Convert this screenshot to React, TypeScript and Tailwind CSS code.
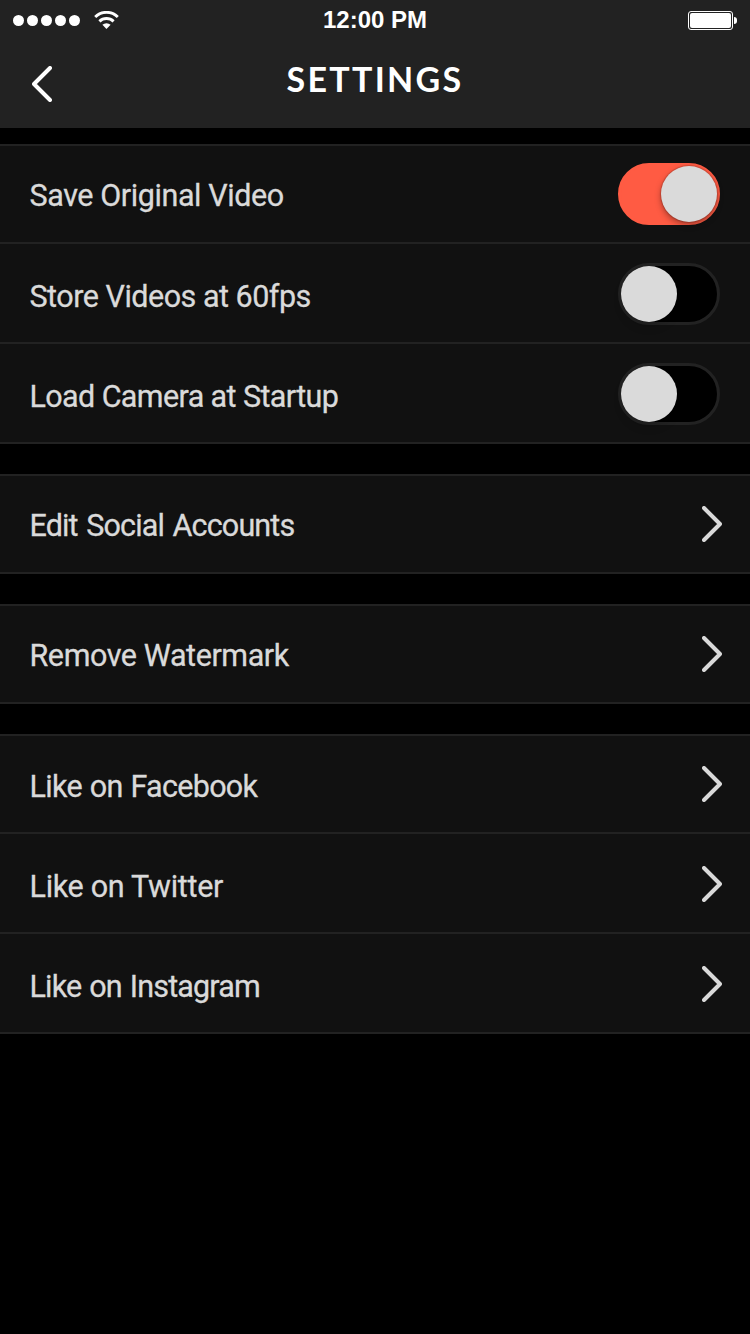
import { useState } from "react";

type RowProps = {
  label: string;
  first?: boolean;
  textClass: string;
  toggle?: boolean;
  on?: boolean;
};

function Toggle({ initial }: { initial: boolean }) {
  const [on, setOn] = useState(initial);
  return (
    <button
      role="switch"
      aria-checked={on}
      onClick={() => setOn(!on)}
      className={
        on
          ? "mr-[30px] flex h-[62px] w-[102px] shrink-0 items-center justify-end rounded-full border-3 border-[#ff5b43] bg-[#ff5b43]"
          : "mr-[30px] flex h-[62px] w-[102px] shrink-0 items-center justify-start rounded-full border-3 border-[#222222] bg-black"
      }
    >
      <span
        className={
          on
            ? "size-14 rounded-full bg-[#dadada] shadow-[0_3px_6px_rgba(0,0,0,0.35),0_0_1px_1px_rgba(0,0,0,0.15)]"
            : "size-14 rounded-full bg-[#dadada] shadow-[0_6px_8px_rgba(0,0,0,0.12)]"
        }
      />
    </button>
  );
}

function ChevronRight() {
  return (
    <svg className="mr-7 h-9 w-5 shrink-0" viewBox="0 0 20 36" fill="none" stroke="#dadada" strokeWidth="4" strokeLinecap="round" strokeLinejoin="round">
      <path d="M2 2L18 18L2 34" />
    </svg>
  );
}

function Row({ label, first, textClass, toggle, on }: RowProps) {
  return (
    <div
      className={
        first
          ? "flex h-[100px] items-center justify-between border-y-2 border-[#222222] bg-[#111111]"
          : "flex h-[100px] items-center justify-between border-b-2 border-[#222222] bg-[#111111] pt-0.5"
      }
    >
      <span className={textClass}>{label}</span>
      {toggle ? <Toggle initial={!!on} /> : <ChevronRight />}
    </div>
  );
}

export default function App() {
  return (
    <div className="flex h-[1334px] w-[750px] flex-col overflow-hidden bg-black font-[Roboto,sans-serif] text-[30.5px] leading-10 whitespace-nowrap text-[#dadada]">
      <header className="h-32 bg-[#222222] text-white">
        <div className="grid h-10 grid-cols-3 items-center">
          <div className="flex items-center pl-[13px]">
            <div className="flex gap-[3px] pt-px">
              <i className="size-[11px] rounded-full bg-white" />
              <i className="size-[11px] rounded-full bg-white" />
              <i className="size-[11px] rounded-full bg-white" />
              <i className="size-[11px] rounded-full bg-white" />
              <i className="size-[11px] rounded-full bg-white" />
            </div>
            <svg className="ml-[14px] h-[18px] w-[25px]" viewBox="0 0 25 18" fill="none" stroke="white" strokeWidth="2.9">
              <path d="M1.2 6A16 16 0 0 1 23.8 6" />
              <path d="M5.4 10.4A10.2 10.2 0 0 1 19.6 10.4" />
              <path d="M12.5 18L8.4 13.8A5.9 5.9 0 0 1 16.6 13.8Z" fill="white" stroke="none" />
            </svg>
          </div>
          <div className="text-center font-['Liberation_Sans',sans-serif] text-2xl font-bold">12:00 PM</div>
          <div className="flex items-center justify-end gap-px pt-px pr-[13px]">
            <div className="h-[19px] w-[45px] rounded-[3px] border border-white p-px">
              <div className="h-full w-full rounded-[2px] bg-white" />
            </div>
            <div className="h-[7px] w-[3px] rounded-r-full bg-white" />
          </div>
        </div>
        <div className="grid h-[88px] grid-cols-3">
          <button className="mt-[26px] ml-8 h-9 w-5" aria-label="Back">
            <svg className="h-9 w-5" viewBox="0 0 20 36" fill="none" stroke="white" strokeWidth="4" strokeLinecap="round" strokeLinejoin="round">
              <path d="M18 2L2 18L18 34" />
            </svg>
          </button>
          <h1 className="mt-[19px] text-center font-[Lato,sans-serif] text-[34px] font-bold tracking-[2.3px]">SETTINGS</h1>
        </div>
      </header>

      <main className="flex flex-col gap-[30px] pt-4 [-webkit-text-stroke:0.3px_#dadada]">
        <section>
          <Row first toggle on label="Save Original Video" textClass="pt-1 pl-[29.5px] tracking-[-0.41px]" />
          <Row toggle label="Store Videos at 60fps" textClass="pt-1.5 pl-[29.5px] tracking-[-0.5px]" />
          <Row toggle label="Load Camera at Startup" textClass="pt-1.5 pl-[29.5px] tracking-[-0.61px]" />
        </section>
        <section>
          <Row first label="Edit Social Accounts" textClass="pt-1 pl-[29.5px] tracking-[-0.85px] [word-spacing:1.8px]" />
        </section>
        <section>
          <Row first label="Remove Watermark" textClass="pt-1 pl-[29.5px] tracking-[-0.42px]" />
        </section>
        <section>
          <Row first label="Like on Facebook" textClass="pt-1.5 pl-[29.5px] tracking-[-0.7px] [word-spacing:1px]" />
          <Row label="Like on Twitter" textClass="pt-1.5 pl-[29.5px] tracking-[-0.3px]" />
          <Row label="Like on Instagram" textClass="pt-1.5 pl-[29.5px] tracking-[-0.85px] [word-spacing:1.3px]" />
        </section>
      </main>
    </div>
  );
}
